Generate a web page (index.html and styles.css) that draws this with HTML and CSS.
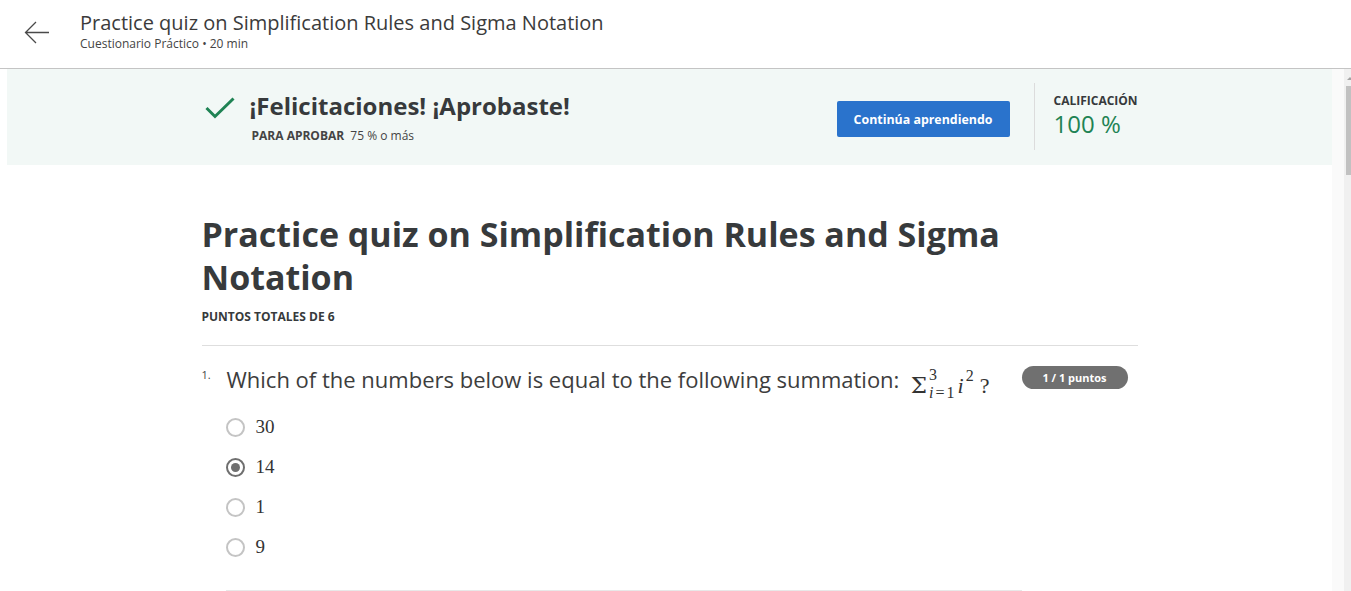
FILE: index.html
```html
<!DOCTYPE html>
<html lang="es">
<head>
<meta charset="utf-8">
<title>Practice quiz on Simplification Rules and Sigma Notation</title>
<link rel="stylesheet" href="styles.css">
</head>
<body>
<header class="topbar">
  <button class="back" aria-label="Atrás">
    <svg width="26" height="24" viewBox="0 0 26 24"><path d="M25 11.5H1.5M12 1L1.5 11.5L12 22" fill="none" stroke="#4a4a4a" stroke-width="1.3"/></svg>
  </button>
  <div class="topbar-text">
    <h1 class="topbar-title">Practice quiz on Simplification Rules and Sigma Notation</h1>
    <div class="topbar-sub">Cuestionario Práctico • 20 min</div>
  </div>
</header>
<div class="viewport">
  <main class="scroll">
    <section class="banner">
      <div class="container banner-inner">
        <div class="result">
          <svg class="check" width="30" height="22" viewBox="0 0 30 22"><path d="M1.5 11L10 19.5L28.5 1.5" fill="none" stroke="#1f8354" stroke-width="3"/></svg>
          <div>
            <div class="result-title">¡Felicitaciones! ¡Aprobaste!</div>
            <div class="result-sub"><b>PARA APROBAR</b> 75 % o más</div>
          </div>
        </div>
        <button class="btn-primary">Continúa aprendiendo</button>
        <div class="divider"></div>
        <div class="grade">
          <div class="grade-label">CALIFICACIÓN</div>
          <div class="grade-value">100 %</div>
        </div>
      </div>
    </section>
    <section class="container quiz">
      <h2 class="quiz-title">Practice quiz on Simplification Rules and Sigma Notation</h2>
      <div class="quiz-points">PUNTOS TOTALES DE 6</div>
      <hr class="rule">
      <div class="question">
        <div class="q-num">1.</div>
        <div class="q-body">
          <div class="q-text">Which of the numbers below is equal to the following summation:&nbsp; <span class="math"><span class="sigma">Σ</span><span class="scripts"><span class="sup">3</span><span class="sub"><i>i</i>=1</span></span><span class="mi">i</span><span class="sup2">2</span><span class="qm">?</span></span></div>
          <div class="options">
            <label class="option"><span class="radio"></span><span class="opt-text">30</span></label>
            <label class="option"><span class="radio checked"></span><span class="opt-text">14</span></label>
            <label class="option"><span class="radio"></span><span class="opt-text">1</span></label>
            <label class="option"><span class="radio"></span><span class="opt-text">9</span></label>
          </div>
          <hr class="rule rule-light">
        </div>
        <div class="q-score"><span class="badge">1 / 1 puntos</span></div>
      </div>
    </section>
  </main>
  <div class="gutter"></div>
  <div class="scrollbar">
    <div class="sb-arrow"></div>
    <div class="sb-thumb"></div>
  </div>
</div>
</body>
</html>
```
FILE: styles.css
```css
* { box-sizing: border-box; }
html, body { margin: 0; padding: 0; height: 100%; overflow: hidden; }
body {
  font-family: "Open Sans", "Noto Sans", sans-serif;
  color: #373a3c;
  background: #fff;
}
.topbar {
  height: 69px;
  border-bottom: 1px solid #c4c4c4;
  display: flex;
  align-items: flex-start;
  padding: 0 0 0 24px;
}
.back {
  margin-top: 21px;
  width: 27px;
  height: 24px;
  padding: 0;
  border: 0;
  background: none;
  display: block;
}
.back svg { display: block; }
.topbar-text { margin-left: 29px; padding-top: 9px; }
.topbar-title {
  margin: 0;
  font-size: 20px;
  font-weight: 400;
  line-height: 28px;
  color: #3b3b3b;
}
.topbar-sub {
  font-size: 12px;
  line-height: 14px;
  color: #444;
}
.viewport {
  display: flex;
  height: calc(100% - 69px);
}
.scroll {
  flex: 1;
  padding-left: 7px;
  overflow: hidden;
}
.gutter { width: 12px; background: #fafafa; }
.scrollbar {
  width: 7px;
  background: #f0f0f0;
}
.sb-arrow {
  margin: 8px 0 0 3px;
  width: 0; height: 0;
  border-left: 3px solid transparent;
  border-right: 3px solid transparent;
  border-bottom: 3px solid #a3a3a3;
}
.sb-thumb {
  margin: 6px 0 0 2px;
  width: 5px;
  height: 89px;
  background: #c1c1c1;
}
.container { width: 936px; margin: 0 auto; }
.banner {
  background: #f2f8f6;
  padding: 14px 0 15px;
}
.banner-inner {
  display: flex;
  align-items: center;
}
.result {
  flex: 1;
  display: flex;
  align-items: flex-start;
}
.check { margin: 8px 0 0 3px; display: block; }
.result-title {
  margin-left: 15px;
  font-size: 24px;
  font-weight: 700;
  line-height: 32px;
  color: #373a3c;
  margin-top: 1px;
}
.result-sub {
  margin: 6px 0 0 17px;
  font-size: 12px;
  line-height: 16px;
  color: #444;
}
.result-sub b { margin-right: 3px; }
.btn-primary {
  width: 173px;
  height: 36px;
  border: 0;
  border-radius: 2px;
  background: #2a73cc;
  color: #fff;
  font-family: inherit;
  font-size: 12.4px;
  font-weight: 700;
  margin-top: 5px;
}
.divider {
  width: 1px;
  align-self: stretch;
  height: 67px;
  background: #dcdcdc;
  margin: 0 19px 0 24px;
}
.grade { width: 84px; margin-top: -4px; }
.grade-label {
  font-size: 12px;
  font-weight: 700;
  line-height: 16px;
  color: #373a3c;
}
.grade-value {
  margin-top: 2px;
  font-size: 24px;
  line-height: 26px;
  color: #1f8354;
}
.quiz { padding-top: 48px; }
.quiz-title {
  margin: 0;
  font-size: 34px;
  font-weight: 700;
  line-height: 43px;
  color: #373a3c;
}
.quiz-points {
  margin-top: 10px;
  font-size: 12px;
  font-weight: 700;
  line-height: 16px;
  color: #373a3c;
}
.rule {
  border: 0;
  height: 1px;
  background: #dedede;
  margin: 20px 0 0;
}
.rule-light { background: #e8e8e8; margin-top: 23px; }
.question {
  display: grid;
  grid-template-columns: 24px 796px 116px;
  margin-top: 16px;
}
.q-num {
  font-size: 11px;
  line-height: 14px;
  padding-top: 6px;
  color: #444;
}
.q-score { padding-top: 3px; }
.q-text {
  height: 28px;
  font-size: 22px;
  line-height: 28px;
  color: #3d3d3d;
  padding-left: 1px;
  white-space: nowrap;
}
.math {
  font-family: "Liberation Serif", "DejaVu Serif", serif;
  font-size: 22px;
  vertical-align: -5px;
  color: #333;
}
.sigma { font-family: "DejaVu Serif", serif; font-size: 23px; margin-right: 2px; }
.scripts {
  display: inline-flex;
  flex-direction: column;
  vertical-align: 13px;
  font-size: 16px;
  line-height: 18px;
}
.sub { letter-spacing: 2px; }
.mi { font-style: italic; margin-left: 1px; }
.sup2 { font-size: 16px; vertical-align: 12px; margin-left: 2px; }
.qm { margin-left: 6px; }
.badge {
  display: inline-block;
  height: 23px;
  line-height: 23px;
  width: 106px;
  text-align: center;
  border-radius: 12px;
  background: #707070;
  color: #fff;
  font-size: 11px;
  font-weight: 700;
}
.options { margin-top: 17px; }
.option {
  display: flex;
  align-items: center;
  height: 40px;
}
.radio {
  width: 19px;
  height: 19px;
  border: 2px solid #c4c4c4;
  border-radius: 50%;
  margin-right: 11px;
  display: flex;
  align-items: center;
  justify-content: center;
}
.radio.checked { border-color: #6f6f6f; }
.radio.checked::after {
  content: "";
  width: 9px;
  height: 9px;
  border-radius: 50%;
  background: #6f6f6f;
}
.opt-text {
  font-family: "Liberation Serif", "DejaVu Serif", serif;
  font-size: 19px;
  color: #333;
}
```
